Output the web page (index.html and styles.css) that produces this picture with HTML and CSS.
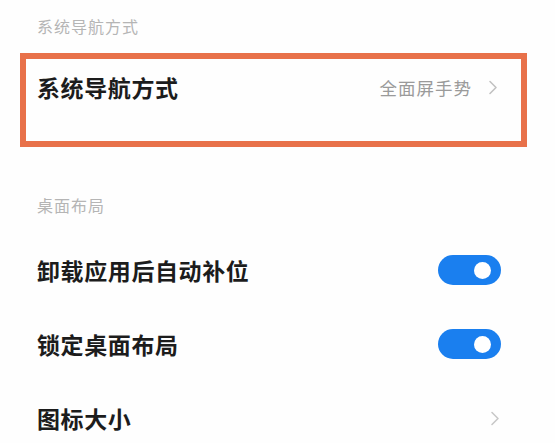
FILE: index.html
```html
<!DOCTYPE html>
<html lang="zh-CN">
<head>
<meta charset="utf-8">
<link rel="stylesheet" href="styles.css">
</head>
<body>
<div class="page">
  <div class="section-title first">系统导航方式</div>
  <div class="highlight">
    <div class="row boxed">
      <span class="label">系统导航方式</span>
      <span class="trail">
        <span class="value">全面屏手势</span>
        <svg class="chev" width="10" height="15" viewBox="0 0 10 15"><polyline points="2,1.5 8,7.5 2,13.5" fill="none" stroke="#c2c2c2" stroke-width="1.6" stroke-linecap="round" stroke-linejoin="round"/></svg>
      </span>
    </div>
  </div>
  <div class="section-title second">桌面布局</div>
  <div class="list">
    <div class="row">
      <span class="label">卸载应用后自动补位</span>
      <span class="toggle"><span class="knob"></span></span>
    </div>
    <div class="row">
      <span class="label">锁定桌面布局</span>
      <span class="toggle"><span class="knob"></span></span>
    </div>
    <div class="row">
      <span class="label">图标大小</span>
      <svg class="chev" width="10" height="15" viewBox="0 0 10 15"><polyline points="2,1.5 8,7.5 2,13.5" fill="none" stroke="#c8c8c8" stroke-width="1.6" stroke-linecap="round" stroke-linejoin="round"/></svg>
    </div>
  </div>
</div>
</body>
</html>
```
FILE: styles.css
```css
html, body {
  margin: 0;
  padding: 0;
  background: #fefefe;
}
body {
  font-family: "Noto Sans CJK SC", "Noto Sans", sans-serif;
  width: 555px;
  height: 443px;
  overflow: hidden;
}
.page {
  display: flex;
  flex-direction: column;
}
.section-title {
  font-size: 16px;
  line-height: 20px;
  color: #b5b5b5;
  letter-spacing: 1px;
  padding-left: 37px;
}
.section-title.first {
  padding-top: 16px;
}
.section-title.second {
  margin-top: 48px;
}
.highlight {
  margin: 17px 28px 0 20px;
  border: 6px solid #e8714a;
  height: 82px;
  box-sizing: content-box;
  padding: 0 22px 0 11px;
}
.row {
  display: flex;
  align-items: center;
  justify-content: space-between;
  height: 74px;
}
.row.boxed {
  height: 30px;
  margin-top: 13px;
}
.label {
  font-size: 23px;
  line-height: 30px;
  font-weight: 700;
  color: #1c1c1c;
  letter-spacing: 0.6px;
}
.trail {
  display: flex;
  align-items: center;
  gap: 16px;
}
.value {
  font-size: 17.5px;
  color: #9a9a9a;
  letter-spacing: 1px;
}
.list {
  margin-top: 18px;
  padding: 0 54px 0 37px;
}
.toggle {
  width: 63px;
  height: 30px;
  border-radius: 15px;
  background: #1a7fef;
  display: flex;
  align-items: center;
  justify-content: flex-end;
  padding-right: 10px;
  box-sizing: border-box;
}
.knob {
  width: 17px;
  height: 17px;
  border-radius: 50%;
  background: #ffffff;
}
.chev {
  display: block;
  margin-right: 1px;
}
```
